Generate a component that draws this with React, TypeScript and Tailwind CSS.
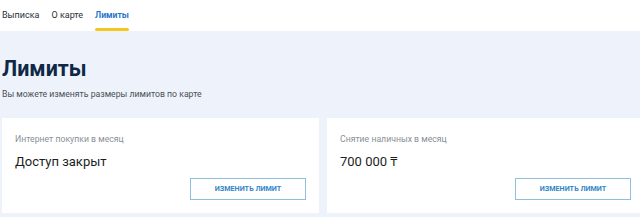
import React from "react";

function Card({ label, value }: { label: string; value: string }) {
  return (
    <div className="w-[317px] shrink-0 bg-white pl-[13px] pr-[13px] pt-[15px] pb-[13px] flex flex-col">
      <div className="text-[8.7px] leading-[12px] text-[#8a8f96]">{label}</div>
      <div className="mt-[9px] text-[13px] leading-[16px] text-[#1b1f24]">{value}</div>
      <div className="mt-[8px] flex justify-end">
        <button className="w-[116px] h-[22px] border border-[#8fbedf] text-[#2f86c8] text-[7.2px] font-bold uppercase">
          Изменить лимит
        </button>
      </div>
    </div>
  );
}

export default function App() {
  return (
    <div className="w-[640px] h-[217px] overflow-hidden bg-[#eef3fb]" style={{ fontFamily: "Roboto, 'Noto Sans', sans-serif" }}>
      <div className="h-[31px] bg-white flex items-start pl-[2px] gap-[12px] text-[9px] leading-[12px]">
        <div className="pt-[9px] text-[#2a2f36]">Выписка</div>
        <div className="pt-[9px] text-[#2a2f36]">О карте</div>
        <div className="pt-[9px] flex flex-col items-stretch">
          <span className="text-[#1f78c8] font-bold text-[8.6px]">Лимиты</span>
          <span className="mt-[7px] h-[3px] bg-[#f5c61b] rounded-full"></span>
        </div>
      </div>
      <div className="pl-[2px]">
        <h1 className="mt-[25px] text-[21.5px] leading-[25px] font-bold text-[#0f2846]">Лимиты</h1>
        <p className="mt-[7px] text-[8.7px] leading-[12px] text-[#4a4f56]">Вы можете изменять размеры лимитов по карте</p>
        <div className="mt-[18px] flex gap-[8px]">
          <Card label="Интернет покупки в месяц" value="Доступ закрыт" />
          <Card label="Снятие наличных в месяц" value="700 000 ₸" />
        </div>
      </div>
    </div>
  );
}
